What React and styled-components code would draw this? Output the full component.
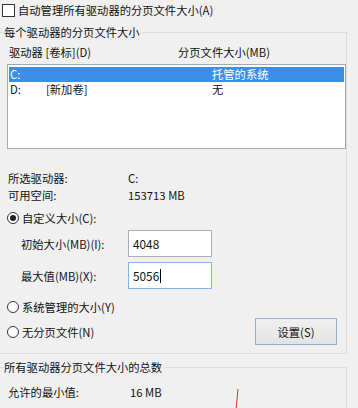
import React from 'react';
import styled, { createGlobalStyle } from 'styled-components';

const GlobalStyle = createGlobalStyle`
  html, body {
    margin: 0;
    padding: 0;
    background: #f0f0f0;
  }
  body {
    font-family: "Noto Sans CJK SC", "Noto Sans", sans-serif;
    font-size: 11.3px;
    color: #111;
  }
`;

export default function App() {
  return (
    <Page>
      <GlobalStyle />
      <CheckRow>
        <CheckBox />
        <span>自动管理所有驱动器的分页文件大小(A)</span>
      </CheckRow>

      <Group $top={7}>
        <Legend>每个驱动器的分页文件大小</Legend>
        <ListHeader>
          <span>驱动器 [卷标](D)</span>
          <span>分页文件大小(MB)</span>
        </ListHeader>
        <ListBox>
          <ListRow $selected>
            <span>C:</span>
            <span></span>
            <span>托管的系统</span>
          </ListRow>
          <ListRow>
            <span>D:</span>
            <span>[新加卷]</span>
            <span>无</span>
          </ListRow>
        </ListBox>

        <InfoRow $top={21}>
          <span>所选驱动器:</span>
          <span>C:</span>
        </InfoRow>
        <InfoRow $top={1}>
          <span>可用空间:</span>
          <span>153713 MB</span>
        </InfoRow>

        <RadioRow $top={7}>
          <Radio $checked />
          <span>自定义大小(C):</span>
        </RadioRow>
        <FieldRow $top={4}>
          <span>初始大小(MB)(I):</span>
          <TextBox>4048</TextBox>
        </FieldRow>
        <FieldRow $top={5}>
          <span>最大值(MB)(X):</span>
          <TextBox $focused>
            5056<Caret />
          </TextBox>
        </FieldRow>

        <RadioRow $top={10}>
          <Radio />
          <span>系统管理的大小(Y)</span>
        </RadioRow>
        <ActionRow>
          <RadioRow $top={0}>
            <Radio />
            <span>无分页文件(N)</span>
          </RadioRow>
          <Button>设置(S)</Button>
        </ActionRow>
      </Group>

      <Group $top={6} $bottom={20}>
        <Legend>所有驱动器分页文件大小的总数</Legend>
        <InfoRow $top={10} $col={122}>
          <span>允许的最小值:</span>
          <span>16 MB</span>
        </InfoRow>
      </Group>

      <Mark width="8" height="22" viewBox="0 0 8 22">
        <line x1="5" y1="1" x2="3" y2="22" stroke="#d0342c" strokeWidth="1" />
      </Mark>
    </Page>
  );
}

const Page = styled.div`
  position: relative;
  width: 358px;
  height: 408px;
  overflow: hidden;
  background: #f0f0f0;
`;

const CheckRow = styled.div`
  display: flex;
  align-items: center;
  gap: 3px;
  height: 15px;
  margin-top: 3px;
  padding-left: 2px;
  line-height: 15px;
`;

const CheckBox = styled.span`
  display: inline-block;
  box-sizing: border-box;
  width: 13px;
  height: 13px;
  border: 1px solid #333;
  background: #fff;
`;

const Group = styled.fieldset`
  box-sizing: border-box;
  width: 353px;
  margin: ${(p) => p.$top}px 0 0 -6px;
  padding: 0 0 ${(p) => p.$bottom ?? 8}px 9px;
  border: 1px solid #dcdcdc;
  min-width: 0;
`;

const Legend = styled.legend`
  padding: 0 3px 0 0;
  height: 14px;
  line-height: 14px;
`;

const ListHeader = styled.div`
  display: grid;
  grid-template-columns: 169px auto;
  height: 14px;
  line-height: 14px;
  margin-top: 6px;
  padding-left: 5px;
`;

const ListBox = styled.div`
  box-sizing: border-box;
  width: 339px;
  height: 85px;
  margin: 5px 0 0 3px;
  padding: 2px 1px 0 1px;
  border: 1px solid #a9a9a9;
  background: #fff;
`;

const ListRow = styled.div`
  display: grid;
  grid-template-columns: 36px 166px auto;
  height: 15px;
  line-height: 15px;
  padding-left: 1px;
  background: ${(p) => (p.$selected ? '#3d8ee9' : 'transparent')};
  color: ${(p) => (p.$selected ? '#fff' : '#111')};
`;

const InfoRow = styled.div`
  display: grid;
  grid-template-columns: ${(p) => p.$col ?? 120}px auto;
  height: 16px;
  line-height: 16px;
  margin-top: ${(p) => p.$top}px;
  padding-left: 4px;
`;

const RadioRow = styled.div`
  display: flex;
  align-items: center;
  gap: 3px;
  height: 16px;
  line-height: 16px;
  margin-top: ${(p) => p.$top}px;
  padding-left: 3px;
`;

const Radio = styled.span`
  position: relative;
  box-sizing: border-box;
  display: inline-block;
  width: 12px;
  height: 12px;
  border: 1px solid #333;
  border-radius: 50%;
  background: #fff;
  &::after {
    content: '';
    display: ${(p) => (p.$checked ? 'block' : 'none')};
    position: absolute;
    left: 2px;
    top: 2px;
    width: 6px;
    height: 6px;
    border-radius: 50%;
    background: #222;
  }
`;

const FieldRow = styled.div`
  display: grid;
  grid-template-columns: 107px 84px;
  align-items: center;
  height: 27px;
  margin-top: ${(p) => p.$top}px;
  padding-left: 17px;
`;

const TextBox = styled.div`
  box-sizing: border-box;
  display: flex;
  align-items: center;
  height: 27px;
  padding-left: 4px;
  border: 1px solid ${(p) => (p.$focused ? '#7eb4ea' : '#abadb3')};
  background: #fff;
  font-size: 11.8px;
`;

const Caret = styled.span`
  display: inline-block;
  width: 1px;
  height: 14px;
  margin-left: 1px;
  background: #000;
`;

const ActionRow = styled.div`
  display: flex;
  align-items: center;
  justify-content: space-between;
  height: 27px;
  margin-top: 3px;
  padding-right: 9px;
`;

const Button = styled.div`
  box-sizing: border-box;
  width: 82px;
  height: 27px;
  display: flex;
  align-items: center;
  justify-content: center;
  border: 1px solid #8fb0cf;
  background: linear-gradient(#f0f0f0, #e3e3e3);
`;

const Mark = styled.svg`
  position: absolute;
  left: 233px;
  top: 388px;
`;
